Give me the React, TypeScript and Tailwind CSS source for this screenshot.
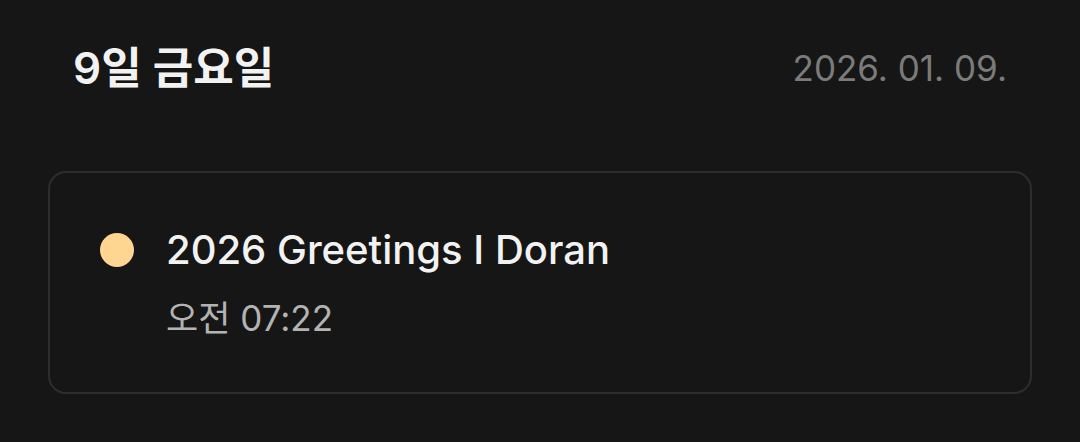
export default function App() {
  const font = { fontFamily: 'Inter, "Noto Sans CJK KR", sans-serif' };

  return (
    <div className="min-h-[442px] w-full bg-[#161616] px-[48px]" style={font}>
      {/* Day header */}
      <div className="flex items-center justify-between px-[25px] pt-[44px]">
        <h1 className="text-[44px] font-semibold leading-[48px] text-[#f2f2f2]">9일 금요일</h1>
        <span className="text-[35px] leading-[48px] text-[#7b7b7b]">2026. 01. 09.</span>
      </div>

      {/* Event card */}
      <div className="mt-[79px] rounded-[18px] border-2 border-[#2d2d2d] px-[50px] pt-[55px] pb-[54px]">
        <div className="flex items-start gap-[32px]">
          <div className="flex h-[44px] items-center">
            <span className="block h-[34px] w-[34px] rounded-full bg-[#ffd592]" />
          </div>
          <div className="flex flex-col">
            <span className="text-[40px] font-medium leading-[44px] text-[#f2f2f2]">2026 Greetings I Doran</span>
            <span className="mt-[26px] text-[35px] leading-[40px] text-[#b3b3b3]">오전 07:22</span>
          </div>
        </div>
      </div>
    </div>
  );
}
